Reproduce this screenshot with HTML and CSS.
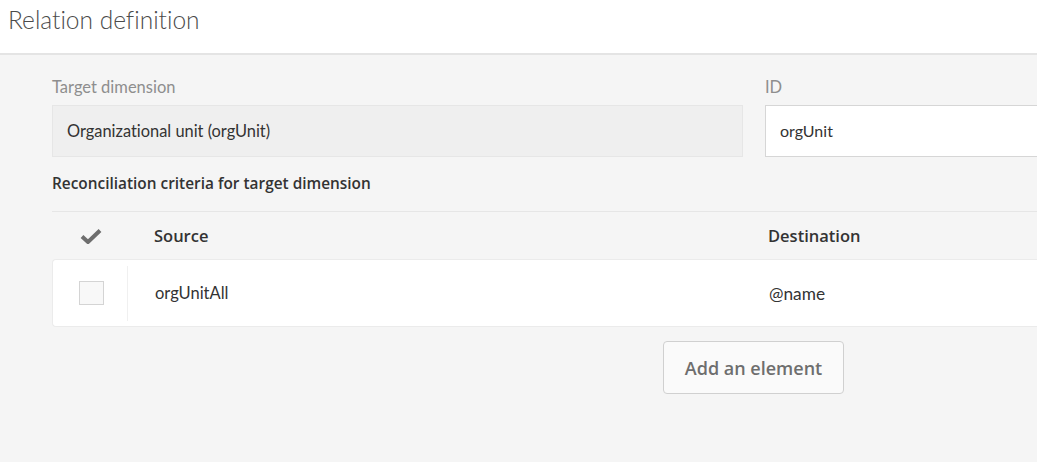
FILE: index.html
```html
<!DOCTYPE html>
<html>
<head>
<meta charset="utf-8">
<link rel="stylesheet" href="styles.css">
</head>
<body>
<header class="header">
  <h1 class="title">Relation definition</h1>
</header>
<main class="content">
  <div class="fields">
    <div class="field field-target">
      <label class="label">Target dimension</label>
      <div class="input input-readonly">Organizational unit (orgUnit)</div>
    </div>
    <div class="field field-id">
      <label class="label">ID</label>
      <div class="input input-id">orgUnit</div>
    </div>
  </div>
  <div class="section-title">Reconciliation criteria for target dimension</div>
  <div class="table">
    <div class="row row-head">
      <div class="cell cell-check">
        <svg class="check-icon" width="22" height="16" viewBox="0 0 22 16"><path d="M2 8.5 L8 14 L20 2.5" fill="none" stroke="#6e6e6e" stroke-width="4"/></svg>
      </div>
      <div class="cell cell-source">Source</div>
      <div class="cell cell-dest">Destination</div>
    </div>
    <div class="row row-data">
      <div class="cell cell-check cell-check-data"><span class="checkbox"></span></div>
      <div class="cell cell-source">orgUnitAll</div>
      <div class="cell cell-dest">@name</div>
    </div>
  </div>
  <div class="actions">
    <button class="btn">Add an element</button>
  </div>
</main>
</body>
</html>
```
FILE: styles.css
```css
html, body {
  margin: 0;
  padding: 0;
  height: 100%;
  overflow: hidden;
}
body {
  font-family: "Lato", "Liberation Sans", sans-serif;
  font-variant-ligatures: none;
  background: #f5f5f5;
  color: #333;
}
.header {
  background: #fff;
  height: 53px;
  border-bottom: 2px solid #e4e4e4;
}
.title {
  margin: 0;
  padding: 5px 0 0 8px;
  font-size: 24.5px;
  font-weight: 300;
  color: #4b4b4b;
  line-height: 30px;
}
.content {
  padding: 22px 0 0 52px;
}
.fields {
  display: flex;
  gap: 22px;
}
.field-target {
  width: 691px;
}
.field-id {
  flex: 1;
}
.label {
  display: block;
  font-size: 16.5px;
  color: #8e8e8e;
  line-height: 20px;
  margin-bottom: 8px;
}
.input {
  height: 52px;
  box-sizing: border-box;
  border: 1px solid #d6d6d6;
  border-right: none;
  background: #fff;
  font-size: 16.4px;
  line-height: 50px;
  padding-left: 14px;
  color: #333;
}
.input-id {
  font-size: 16px;
}
.input-readonly {
  background: #efefef;
  border: 1px solid #e6e6e6;
}
.section-title {
  font-family: "Open Sans", "Lato", sans-serif;
  font-size: 15.4px;
  font-weight: 600;
  color: #333;
  line-height: 20px;
  margin-top: 17px;
  margin-bottom: 17px;
}
.table {
  border-top: 1px solid #e6e6e6;
}
.row {
  display: flex;
  align-items: center;
}
.row-head {
  height: 47px;
  font-family: "Open Sans", "Lato", sans-serif;
  font-size: 16.5px;
  font-weight: 600;
  color: #333;
}
.row-data {
  height: 68px;
  box-sizing: border-box;
  background: #fff;
  border: 1px solid #ebebeb;
  border-right: none;
  border-radius: 4px 0 0 4px;
  font-size: 16.5px;
  color: #333;
}
.row-data .cell-dest {
  font-size: 17.3px;
}
.cell-check {
  width: 75px;
  height: 100%;
  display: flex;
  align-items: center;
  justify-content: center;
  box-sizing: border-box;
}
.cell-check-data {
  height: 55px;
  border-right: 1px solid #f0f0f0;
}
.check-icon {
  display: block;
  margin-left: 2px;
}
.checkbox {
  display: block;
  width: 23px;
  height: 22px;
  border: 1px solid #d4d4d4;
  background: #f8f8f8;
  margin-left: 2px;
}
.cell-source {
  width: 614px;
  padding-left: 27px;
}
.cell-dest {
  flex: 1;
}
.actions {
  display: flex;
  padding-left: 611px;
  margin-top: 14px;
}
.btn {
  width: 181px;
  height: 53px;
  border: 1px solid #d0d0d0;
  border-radius: 4px;
  background: #fafafa;
  font-family: "Open Sans", "Lato", sans-serif;
  font-size: 18px;
  font-weight: 600;
  color: #6e6e6e;
  padding: 0;
}
```
